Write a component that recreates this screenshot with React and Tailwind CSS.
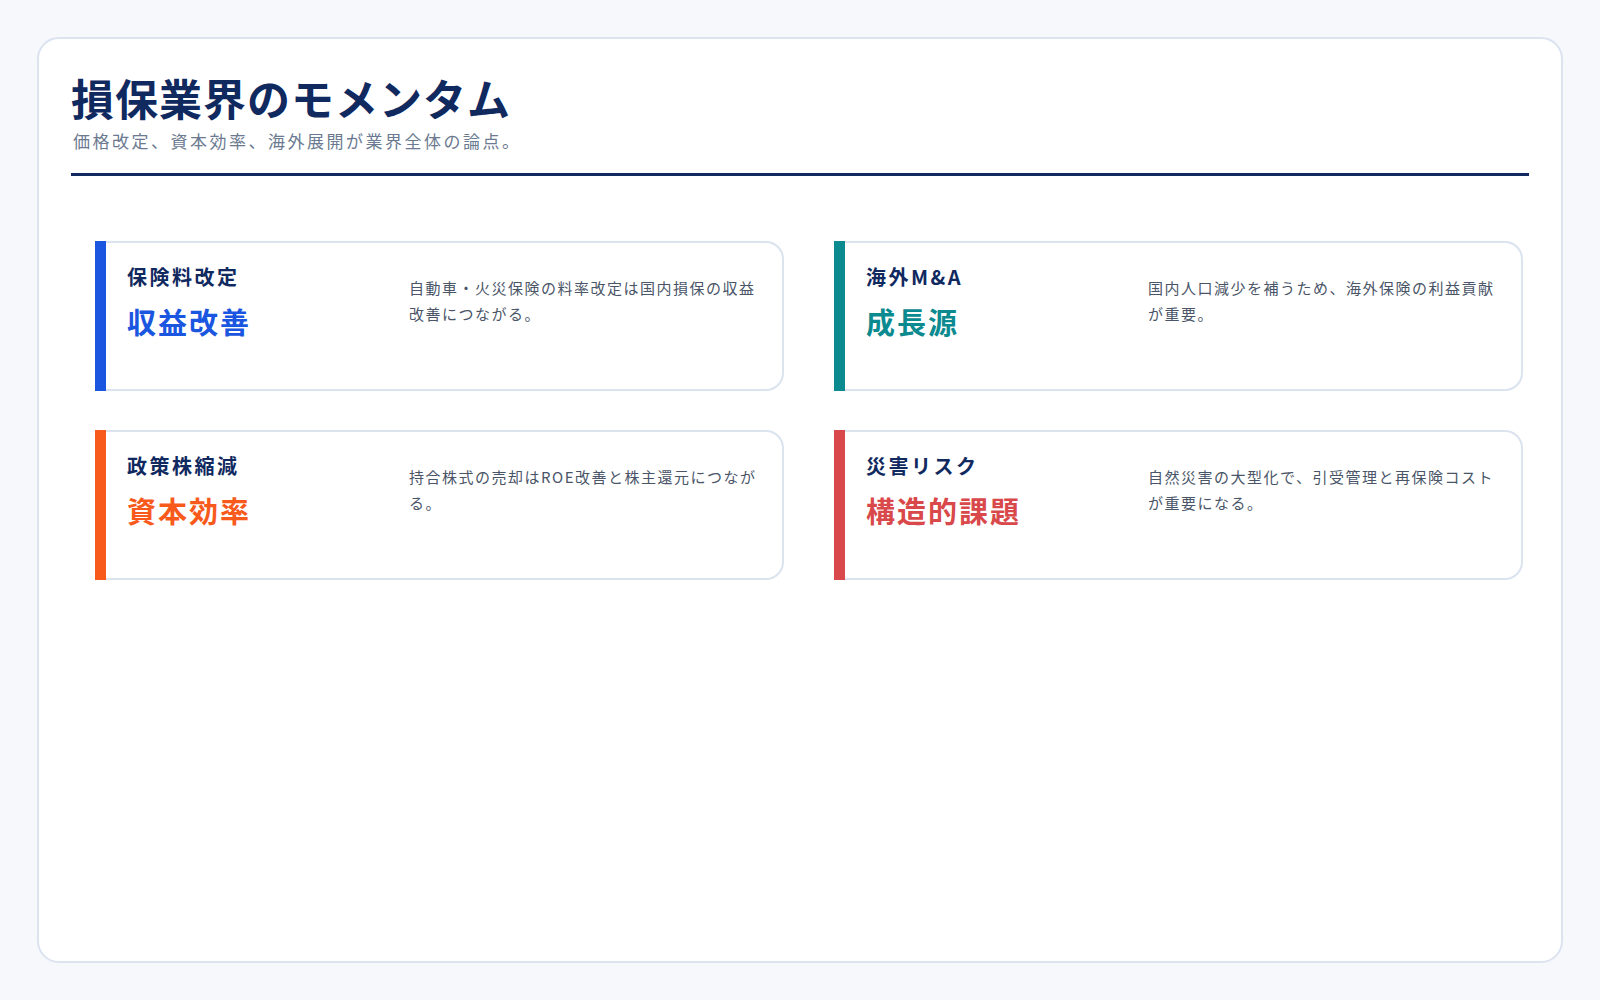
const F = { fontFamily: '"Noto Sans CJK JP", "Noto Sans", sans-serif' };
const cards = [
  { label: "保険料改定", value: "収益改善", bar: "bg-[#1a56e0]", text: "text-[#1a56e0]", desc: "自動車・火災保険の料率改定は国内損保の収益改善につながる。" },
  { label: "海外M&A", value: "成長源", bar: "bg-[#0b8a8f]", text: "text-[#0b8a8f]", desc: "国内人口減少を補うため、海外保険の利益貢献が重要。" },
  { label: "政策株縮減", value: "資本効率", bar: "bg-[#f85a1b]", text: "text-[#f85a1b]", desc: "持合株式の売却はROE改善と株主還元につながる。" },
  { label: "災害リスク", value: "構造的課題", bar: "bg-[#d9484a]", text: "text-[#d9484a]", desc: "自然災害の大型化で、引受管理と再保険コストが重要になる。" },
];
export default function App() {
  return (
    <div className="h-screen w-full bg-[#f6f8fb] p-[37px]" style={F}>
      <div className="h-full rounded-[22px] border-2 border-[#dbe3ef] bg-white px-8 pt-[28px]">
        <h1 className="text-[43px] font-bold leading-[60px] text-[#10295f] tracking-[1px]">損保業界のモメンタム</h1>
        <p className="mt-[2px] ml-[2px] text-[17px] leading-6 tracking-[2.5px] text-[#6b7a90]">価格改定、資本効率、海外展開が業界全体の論点。</p>
        <div className="mt-[20px] h-[3px] bg-[#10295f]" />
        <div className="ml-6 mr-[6px] mt-[65px] grid grid-cols-2 gap-x-[50px] gap-y-[39px]">
          {cards.map((c) => (
            <div key={c.label} className="flex h-[150px] rounded-r-[18px] border-2 border-l-0 border-[#dbe3ef] bg-white">
              <div className={`w-[11px] shrink-0 ${c.bar} -my-[2px]`} />
              <div className="flex flex-1 pl-[21px] pr-4 pt-[20px]">
                <div className="w-[282px] shrink-0">
                  <div className="text-[20px] font-bold leading-7 tracking-[2.5px] text-[#10295f]">{c.label}</div>
                  <div className={`mt-[12px] text-[29px] font-bold leading-9 tracking-[2px] ${c.text}`}>{c.value}</div>
                </div>
                <p className="pt-[12px] text-[15px] leading-[26px] tracking-[1.5px] text-[#4a5568]">{c.desc}</p>
              </div>
            </div>
          ))}
        </div>
      </div>
    </div>
  );
}
